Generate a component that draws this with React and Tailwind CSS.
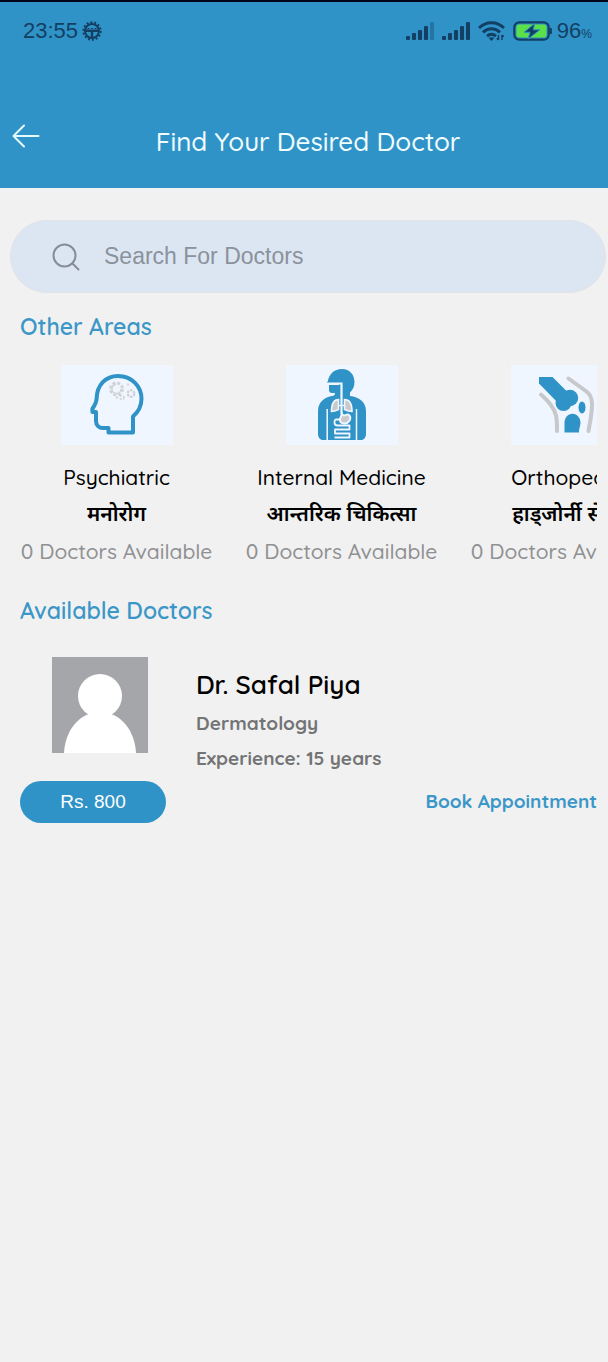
import { useState } from 'react';

const SignalIcon = ({ weak = false }) => (
    <svg viewBox="0 0 28 18" className="h-[18px] w-7" fill="#123f63" aria-hidden="true">
        <rect x="0" y="14" width="4" height="4" rx="1" />
        <rect x="6" y="11" width="4" height="7" rx="1" />
        <rect x="12" y="8" width="4" height="10" rx="1" />
        <rect x="18" y="4" width="4" height="14" rx="1" />
        <rect x="24" y="0" width="4" height="18" rx="1" opacity={weak ? 0.35 : 1} />
    </svg>
);

const WifiIcon = () => (
    <svg viewBox="0 0 27 20" className="h-5 w-[27px]" fill="none" stroke="#123f63" strokeWidth="3" aria-hidden="true">
        <path d="M1 7C8 0 19 0 26 7" />
        <path d="M5 11.300c5-4.600 12-4.600 17 0" />
        <path d="M9 15.200c2.700-2.300 6.300-2.300 9 0" />
        <path d="M13.500 20l-2.800-3c1.600-1.100 4-1.100 5.600 0z" fill="#123f63" stroke="none" />
        <path d="M20.500 14v5m-1.800-1.800l1.800 1.800M24 19v-5m0 0l1.800 1.800" strokeWidth="1.400" />
    </svg>
);

const BatteryIcon = () => (
    <svg viewBox="0 0 40 20" className="h-5 w-10" aria-hidden="true">
        <rect x="1.300" y="1.300" width="34.400" height="17.400" rx="5" fill="none" stroke="#123f63" strokeWidth="2.200" />
        <rect x="3.500" y="3.500" width="30" height="13" rx="3" fill="#5be04a" />
        <path d="M21.500 2.500L11 11.300h6l-2 6.700L27 8.800h-6.500z" fill="#123f63" stroke="#3093c7" strokeWidth="1" />
        <path d="M37.800 7v6" stroke="#123f63" strokeWidth="2" />
    </svg>
);

const GearIcon = () => (
    <svg viewBox="0 0 20 20" className="h-5 w-5" fill="none" stroke="#123f63" aria-hidden="true">
        <circle cx="10" cy="10" r="8.700" strokeWidth="2" strokeDasharray="2 1.905" />
        <circle cx="10" cy="10" r="7" strokeWidth="2" />
        <path d="M3 9.800h14M10 10v7" strokeWidth="2.400" />
        <path d="M5.500 7.500h9" strokeWidth="1" strokeDasharray="2 1.500" />
    </svg>
);

const PsychiatricIcon = () => (
    <svg viewBox="0 0 112 80" className="h-20 w-28" fill="none" aria-hidden="true">
        <path
            d="M47.500 67.500v-4.500h-5.500c-4 0-7-3-7-7v-9h-3.600v-3.300c2.200-3 4-6 4.200-10C36 20 44.500 11 57 11c13.500 0 23.500 10 23.500 22.800 0 8-3 13-8.500 17.700v16H47.500z"
            stroke="#3093c7"
            strokeWidth="4"
            strokeLinejoin="round"
        />
        <circle cx="55.500" cy="24" r="6" stroke="#d2d3d6" strokeWidth="3" strokeDasharray="3 1.700" />
        <circle cx="55.500" cy="24" r="4.500" stroke="#d2d3d6" strokeWidth="1.500" strokeDasharray="20 9" />
        <circle cx="70" cy="28.500" r="3.300" stroke="#d2d3d6" strokeWidth="2.400" strokeDasharray="2.500 1" />
        <circle cx="61" cy="32.500" r="2" stroke="#d2d3d6" strokeWidth="1.600" strokeDasharray="2 1.200" />
        <path d="M66 19.500h2M55 32.500h2" stroke="#d2d3d6" strokeWidth="2" />
    </svg>
);

const InternalMedicineIcon = () => (
    <svg viewBox="0 0 112 80" className="h-20 w-28" fill="none" aria-hidden="true">
        <path d="M41.500 17.500C43 9 48 4 56 4c8 0 12.500 6 12.500 13 0 5-2 8-4.500 10.500V31c9 1 16 6 16 15v22.500c0 4-2 6.500-5 6.500H37c-3 0-5-2.500-5-6.500V46c0-9 7-14 14-15 2 0 3-1 3-3h-3c-2 0-3-1-3-3v-5h10v-2H41z" fill="#3093c7" />
        <path d="M41.200 44v31M70.500 44v31" stroke="#f0f6ff" strokeWidth="1.500" />
        <path d="M42 18.500h13.500v31" stroke="#f0f6ff" strokeWidth="2.200" />
        <path d="M52.500 34.500c-5 0-7 4-7 12 3 0 5-1 7-2zM58.500 34.500c5 0 7.500 4 7.500 12-3 0-5.500-1-7.500-2z" fill="#c9cacc" stroke="#f0f6ff" strokeWidth="1.600" />
        <path d="M53 40.500h6" stroke="#f0f6ff" strokeWidth="1.400" />
        <path d="M56 49c2 4 4-1 7 1 3.500 4-1 9-5 8.500-3 0-4.500-2-4-4.500z" fill="#c9cacc" stroke="#f0f6ff" strokeWidth="2" />
        <path d="M54 54.500h-3.500c-2 0-2 1-2 3 0 2.500 1 3 3 3H63.500v4H49v4h14.500v4H48.500" stroke="#f0f6ff" strokeWidth="1.800" strokeLinejoin="round" />
    </svg>
);

const OrthopedicIcon = () => (
    <svg viewBox="0 0 112 80" className="h-20 w-28" aria-hidden="true">
        <path d="M28 12h13.500l17 17-9.500 11L28 18.500z" fill="#3093c7" />
        <circle cx="59" cy="33" r="8.200" fill="#3093c7" />
        <circle cx="52.500" cy="38" r="8" fill="#3093c7" />
        <path d="M53.500 67.500V58c0-5.500 3.500-9.300 8-9.300s8 4 8 9c0 3-1.500 5-1.500 9.800z" fill="#3093c7" />
        <ellipse cx="71" cy="42.500" rx="3.500" ry="6" fill="#3093c7" />
        <path d="M30 29.500c7 6 13 13 15 21 .8 4 1 10 1 15.500M57.500 13.500l18 13c4 3 5.500 7 5.500 13 0 10-2 17-3.500 26.500" fill="none" stroke="#c6c8cb" strokeWidth="4" strokeLinecap="round" />
    </svg>
);

const areas = [
    { name: 'Psychiatric', nepali: 'मनोरोग', count: 0, Icon: PsychiatricIcon },
    { name: 'Internal Medicine', nepali: 'आन्तरिक चिकित्सा', count: 0, Icon: InternalMedicineIcon },
    { name: 'Orthopedic', nepali: 'हाड्जोर्नी सेवा', count: 0, Icon: OrthopedicIcon },
];

const doctors = [
    { id: 1, name: 'Dr. Safal Piya', speciality: 'Dermatology', experience: 15, fee: 800 },
];

const StatusBar = () => (
    <div className="flex items-center justify-between border-t-2 border-[#02041c] pt-[18px] pr-4 pl-[23px] font-['Liberation_Sans',sans-serif] text-[#123f63]">
        <div className="flex items-center gap-1 text-[22px] leading-[22px]">
            <span>23:55</span>
            <GearIcon />
        </div>
        <div className="flex items-center gap-2">
            <SignalIcon weak />
            <SignalIcon />
            <WifiIcon />
            <div className="flex items-center gap-1">
                <BatteryIcon />
                <span className="text-[22px] leading-[22px]">
                    96<span className="text-xs">%</span>
                </span>
            </div>
        </div>
    </div>
);

const AreaCard = ({ area }) => (
    <a href="#area" className="flex w-[193px] shrink-0 flex-col items-center whitespace-nowrap">
        <div className="bg-[#f0f6ff]">
            <area.Icon />
        </div>
        <h3 className="mt-4 text-[21px] leading-8 font-medium text-black">{area.name}</h3>
        <p className="mt-1 text-[21px] leading-8 font-semibold text-black">{area.nepali}</p>
        <p className="mt-1.5 text-[21px] leading-8 font-medium text-[#8f9092]">{area.count} Doctors Available</p>
    </a>
);

const DoctorCard = ({ doctor }) => (
    <article>
        <div className="flex pl-8">
            <svg viewBox="0 0 96 96" className="h-24 w-24 shrink-0" role="img" aria-label={doctor.name}>
                <rect width="96" height="96" fill="#a5a6aa" />
                <circle cx="48" cy="39" r="22" fill="#fff" />
                <path d="M12 96C13 77 23 62 37 57h22c14 5 24 20 25 39z" fill="#fff" />
            </svg>
            <div className="ml-12 pt-3">
                <h3 className="text-[26px] leading-8 font-semibold text-black">{doctor.name}</h3>
                <p className="mt-2 text-[19px] leading-7 font-bold text-[#737476]">{doctor.speciality}</p>
                <p className="mt-[7px] text-[19px] leading-7 font-bold text-[#737476]">Experience: {doctor.experience} years</p>
            </div>
        </div>
        <div className="mt-[9px] flex items-start justify-between">
            <button type="button" className="h-[42px] w-[146px] rounded-full bg-[#3093c7] font-['Liberation_Sans',sans-serif] text-[19px] text-white">
                Rs. {doctor.fee}
            </button>
            <button type="button" className="pt-1 text-[19px] leading-8 font-bold text-[#3b97c8]">
                Book Appointment
            </button>
        </div>
    </article>
);

export default function App() {
    const [query, setQuery] = useState('');

    return (
        <div className="min-h-screen bg-[#f1f1f1] font-['Quicksand','Lato','Noto_Sans_Devanagari',sans-serif]">
            <header className="bg-[#3093c7] pb-7">
                <StatusBar />
                <div className="mt-[82px] flex items-center px-3">
                    <button type="button" aria-label="Back" className="pb-3">
                        <svg viewBox="0 0 28 24" className="h-6 w-7" fill="none" stroke="#e6fbff" strokeWidth="2" strokeLinecap="round" strokeLinejoin="round">
                            <path d="M26.500 12H1.500M12 1.500L1.500 12 12 22.500" />
                        </svg>
                    </button>
                    <h1 className="flex-1 pr-5 text-center text-[26px] leading-9 font-medium text-[#f0fdff]">Find Your Desired Doctor</h1>
                </div>
            </header>

            <main className="pr-[11px] pl-5">
                <label className="mt-8 -mr-[9px] -ml-[10px] flex h-[73px] items-center rounded-full border border-[#e2e3e6] bg-[#dce6f3] pr-8 pl-[41px]">
                    <svg viewBox="0 0 28 28" className="h-7 w-7 shrink-0" fill="none" stroke="#858d97" strokeWidth="2" strokeLinecap="round" aria-hidden="true">
                        <circle cx="12.500" cy="12.500" r="11" />
                        <path d="M20.500 20.500l6 6" />
                    </svg>
                    <input
                        type="text"
                        aria-label="Search For Doctors"
                        placeholder="Search For Doctors"
                        value={query}
                        onChange={(e) => setQuery(e.target.value)}
                        className="ml-6 min-w-0 flex-1 bg-transparent font-['Liberation_Sans',sans-serif] text-[23px] text-[#737b85] outline-none placeholder:text-[#8b929b]"
                    />
                </label>

                <section className="mt-4">
                    <h2 className="text-[23px] leading-9 font-semibold text-[#3b97c8]">Other Areas</h2>
                    <div className="mt-5 flex gap-8 overflow-x-auto [scrollbar-width:none]">
                        {areas.map((area) => (
                            <AreaCard key={area.name} area={area} />
                        ))}
                    </div>
                </section>

                <section className="mt-[26px]">
                    <h2 className="text-[23px] leading-9 font-semibold text-[#3b97c8]">Available Doctors</h2>
                    <div className="mt-7">
                        {doctors.map((doctor) => (
                            <DoctorCard key={doctor.id} doctor={doctor} />
                        ))}
                    </div>
                </section>
            </main>
        </div>
    );
}
